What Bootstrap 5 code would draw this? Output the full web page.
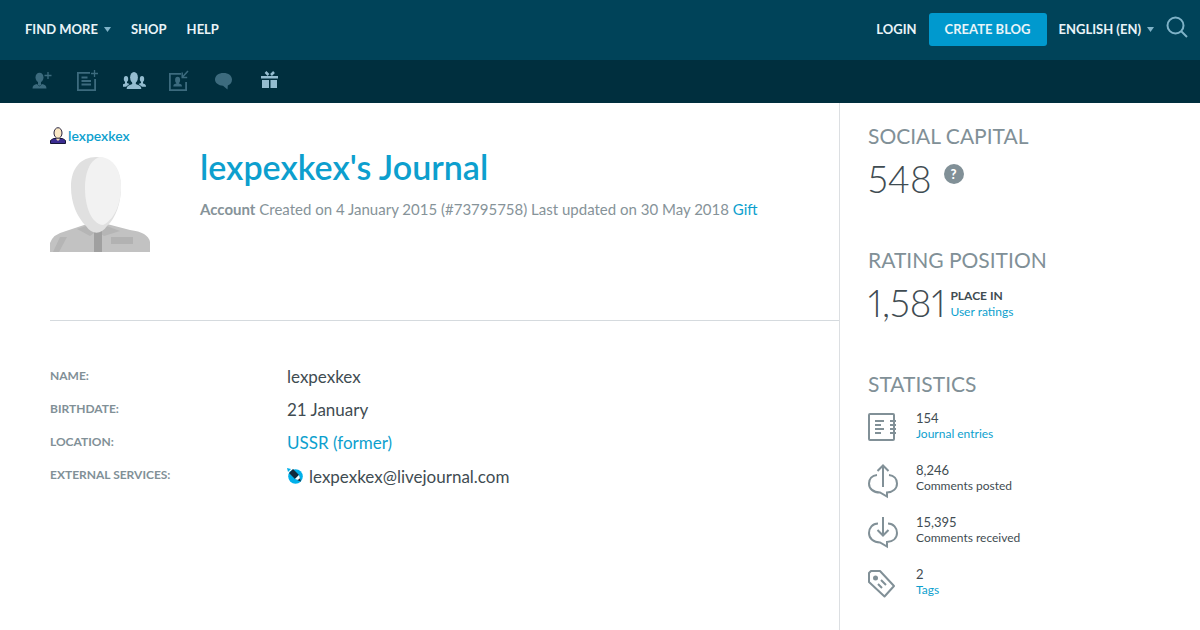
<!DOCTYPE html>
<html lang="en">
<head>
<meta charset="utf-8">
<meta name="viewport" content="width=device-width, initial-scale=1">
<title>lexpexkex's Journal</title>
<link rel="stylesheet" href="https://cdn.jsdelivr.net/npm/bootstrap@5.3.0/dist/css/bootstrap.min.css">
<style>
body{font-family:Lato,"Liberation Sans",sans-serif;color:#3f4c52;background:#fff}
a{color:#0d9fce;text-decoration:none}
svg{display:block;flex:none}
.topbar{background:#004359;height:60px;padding:0 12px 2px 25px;font-size:13px;line-height:20px;font-weight:700}
.topbar a{color:#e9f4f8}
.topbar svg{color:#7fb3c8}
.topbar .menu-left{gap:20px}
.topbar .menu-right{gap:12px}
.topbar .has-caret{gap:6px}
.topbar .btn-create{background:#0099ce;color:#e9f4f8;font-size:13px;font-weight:700;line-height:21px;padding:6px 16px;border-radius:3px}
.toolbar{background:#002f3e;height:43px;padding:0 31px 2px;gap:22px}
.toolbar a{color:#3c6b7e}
.toolbar .lit{color:#94bdd0}
.main-col{padding:24px 0 0 50px}
.side-col{width:361px;border-left:1px solid #dcdfe2;padding:20px 28px;min-height:calc(100vh - 103px)}
.profile-head{border-bottom:1px solid #d5dade;height:194px}
.avatar-col{width:150px}
.user-link{font-size:14px;line-height:18px;font-weight:600;gap:2px}
.journal-title{font-size:34px;line-height:40px;font-weight:600;color:#0d9fce;margin:20px 0 12px}
.account{font-size:15px;line-height:20px;color:#869399}
.details{padding-top:40px}
.details .entry{height:33px}
.details dt{width:237px;font-size:12px;line-height:30px;font-weight:700;color:#819097}
.details dd{font-size:17px;line-height:32px}
.service{gap:6px}
.side-title{font-size:21px;line-height:26px;font-weight:400;color:#819097}
.side-block{height:124px}
.figure-num{font-size:37px;line-height:36px;font-weight:300;font-variant-numeric:proportional-nums}
.figure-row{margin-top:12px}
.rank-note{font-size:12px;line-height:16px;padding:3px 0 0 5px}
.help-mark{width:20px;height:20px;background:#819097;color:#fff;font-size:13px;line-height:20px;font-weight:900;margin:3px 0 0 12px}
.stat-list{padding-top:14px}
.stat-item{font-size:13px;line-height:15px;height:52px}
.stat-label{font-size:12px}
.stat-icon{width:48px;color:#819097}
</style>
</head>
<body>
<header>
<nav class="topbar d-flex align-items-center justify-content-between" aria-label="Main">
  <div class="menu-left d-flex align-items-center">
    <a href="#" class="has-caret d-flex align-items-center">FIND MORE <svg width="7" height="5"><path d="M0 0h7L3.500 5z" fill="currentColor"/></svg></a>
    <a href="#">SHOP</a>
    <a href="#">HELP</a>
  </div>
  <div class="menu-right d-flex align-items-center">
    <a href="#">LOGIN</a>
    <button type="button" class="btn btn-create border-0">CREATE BLOG</button>
    <a href="#" class="has-caret d-flex align-items-center">ENGLISH (EN) <svg width="7" height="5"><path d="M0 0h7L3.500 5z" fill="currentColor"/></svg></a>
    <a href="#" aria-label="Search"><svg width="22" height="26" fill="none" stroke="currentColor" stroke-width="2"><circle cx="9.500" cy="9.500" r="8"/><path d="M15 15l6 6"/></svg></a>
  </div>
</nav>
<nav class="toolbar d-flex align-items-center" aria-label="Journal actions">
  <a href="#" aria-label="Add friend"><svg width="24" height="24" fill="currentColor"><ellipse cx="8.500" cy="8.500" rx="4" ry="4.800"/><path d="M7 12h3v3.500l-1.500 1.500L7 15.500z"/><path d="M1.500 19.500c0-3 2-4 4.500-4.500l2.500 2.500L11 15c2.500.5 4.500 1.500 4.500 4.500z"/><path d="M17 3v7M13.500 6.500h7" stroke="currentColor" stroke-width="1.300"/></svg></a>
  <a href="#" aria-label="Add note"><svg width="24" height="24" viewBox="0 1 24 24" fill="none" stroke="currentColor" stroke-width="1.800"><path d="M13 4.900H.9v17.200h17.200V11M4.500 9.500h6M4.500 13h9.500M4.500 16.500h9.500"/><path d="M17.500 2v7M14 5.500h7" stroke-width="1.300"/></svg></a>
  <a href="#" class="lit" aria-label="Community"><svg width="24" height="24" viewBox="1 0 24 24" fill="currentColor"><g transform="translate(-1)"><ellipse cx="13" cy="8.500" rx="3.900" ry="5.600"/><path d="M11.200 11h3.600v4l3.500 1.500c1.500.7 2 2 2 3.500H5.700c0-1.500.5-2.800 2-3.500l3.500-1.500z"/><ellipse cx="5" cy="10" rx="2.200" ry="3"/><path d="M4 12h2v2l2.500 1L5 17.800H1c0-1.800.5-2.600 3-3.300z"/><ellipse cx="21" cy="10" rx="2.200" ry="3"/><path d="M20 12h2v2.500c2.500.7 3 1.500 3 3.300h-4L17.500 15l2.500-1z"/></g></svg></a>
  <a href="#" aria-label="Share contact"><svg width="24" height="24" viewBox="2 0 24 24" fill="none" stroke="currentColor" stroke-width="1.800"><path d="M13 4.900H1.900v16.200h16.200V13" transform="translate(1)"/><path d="M21 2l-5.500 6M15.200 3.500v5h5" stroke-width="1.500"/><g fill="currentColor" stroke="none" transform="translate(1)"><ellipse cx="9.600" cy="11" rx="2.500" ry="3.200"/><path d="M8.300 13h2.600v1.500c2.300.5 3.100 1.300 3.100 3H5.300c0-1.700.5-2.500 3-3z"/></g></svg></a>
  <a href="#" aria-label="Comments"><svg width="24" height="24" fill="currentColor"><path d="M8.500 4C13.500 4 17 6.700 17 10.500c0 2.700-1.500 5-4.200 6l-.3 4-4.500-3.700C3.500 16.500 0 14 0 10.500 0 6.700 3.500 4 8.500 4z"/></svg></a>
  <a href="#" class="lit" aria-label="Gift"><svg width="24" height="24" fill="currentColor"><path d="M0 7h17v2.500H0zM1 11h7v8H1zM9.500 11H16v8H9.500z"/><path d="M4.500 3l3 3M13 3l-3 3" stroke="currentColor" stroke-width="2.500"/></svg></a>
</nav>
</header>
<div class="d-flex">
  <main class="main-col flex-grow-1">
    <section class="profile-head d-flex">
      <div class="avatar-col">
        <a href="#" class="user-link d-flex align-items-center">
          <svg width="16" height="18"><path d="M.500 16.500v-3l3-2h9l3 2v3z" fill="#3b2c91" stroke="#171638"/><path d="M6.500 10h3v2.500L8 14l-1.500-1.500z" fill="#f5deb5"/><ellipse cx="8" cy="6" rx="4" ry="5.300" fill="#fae8c5" stroke="#2a2540"/></svg>lexpexkex</a>
        <svg class="mt-2" width="100" height="100" viewBox="0 2 100 100" aria-label="User picture"><path d="M0 101V92Q3 83 16 80L37 73h20l23 6q18 2 20 12v10z" fill="#c2c2c2"/><path d="M27 78l15-5 12 1 16 6-16 5-7-5-7 5z" fill="#b5b5b5"/><path d="M10 86l7 0-8 15H3z" fill="#b5b5b5"/><path d="M44 80h8v21h-8z" fill="#a0a0a0"/><path d="M61 86h22v7H61z" fill="#b2b2b2"/><path d="M46 6C31 6 21 17 21 36c0 16 6 30 15 39 6 9 15 9 21 0 9-8 14-23 14-39C71 17 61 6 46 6z" fill="#e0e0e0"/><path d="M51 6c12 1 20 13 20 30 0 17-7 33-18 38-11-1-18-17-18-37 0-17 6-30 16-31z" fill="#f2f2f2"/></svg>
      </div>
      <div>
        <h1 class="journal-title">lexpexkex's Journal</h1>
        <p class="account m-0"><b>Account</b> Created on 4 January 2015 (#73795758) Last updated on 30 May 2018 <a href="#">Gift</a></p>
      </div>
    </section>
    <section class="details">
      <dl class="m-0">
        <div class="entry d-flex"><dt>NAME:</dt><dd class="m-0">lexpexkex</dd></div>
        <div class="entry d-flex"><dt>BIRTHDATE:</dt><dd class="m-0">21 January</dd></div>
        <div class="entry d-flex"><dt>LOCATION:</dt><dd class="m-0"><a href="#">USSR (former)</a></dd></div>
        <div class="entry d-flex"><dt>EXTERNAL SERVICES:</dt><dd class="service m-0 d-flex align-items-center"><svg width="16" height="18"><circle cx="8.500" cy="8.500" r="7.300" fill="#00b0ea"/><path d="M0 0l4 1-3 3z" fill="#00b0ea"/><path d="M2 5l4-4 6 6-4 4z" fill="#122a3c"/><path d="M8 11l4-4 1.500 5.500z" fill="#fff"/><path d="M10.500 12.300l2.500-2 1 3.200z" fill="#122a3c"/></svg>lexpexkex@livejournal.com</dd></div>
      </dl>
    </section>
  </main>
  <aside class="side-col flex-shrink-0">
    <section class="side-block">
      <h2 class="side-title m-0">SOCIAL CAPITAL</h2>
      <div class="figure-row d-flex"><span class="figure-num">548</span><a href="#" class="help-mark rounded-circle text-center" aria-label="Help">?</a></div>
    </section>
    <section class="side-block">
      <h2 class="side-title m-0">RATING POSITION</h2>
      <div class="figure-row d-flex"><span class="figure-num">1,581</span><div class="rank-note"><b class="d-block">PLACE IN</b><a href="#">User ratings</a></div></div>
    </section>
    <section>
      <h2 class="side-title m-0">STATISTICS</h2>
      <ul class="stat-list list-unstyled m-0">
        <li class="stat-item d-flex"><div class="stat-icon"><svg width="32" height="32" fill="none" stroke="currentColor" stroke-width="2"><rect x="1" y="3" width="25" height="26" rx="1"/><path d="M7 10h9M7 14h6M7 18h9M7 22h6M22 10h6M22 14h6M22 18h6M22 22h6"/></svg></div><div><div>154</div><a href="#" class="stat-label">Journal entries</a></div></li>
        <li class="stat-item d-flex"><div class="stat-icon"><svg width="32" height="36" fill="none" stroke="currentColor" stroke-width="2"><path d="M15 24V3M9.500 8L15 2.500 20.500 8M9 12C4 12.500 1 16 1 20.500 1 25.500 5 29.500 12 29.500l7 4V29.500c6-.5 10-4 10-9 0-4.500-3-8-8-8.500"/></svg></div><div><div>8,246</div><div class="stat-label">Comments posted</div></div></li>
        <li class="stat-item d-flex"><div class="stat-icon"><svg width="32" height="36" fill="none" stroke="currentColor" stroke-width="2"><path d="M15 2v18M9.500 15l5.500 5.500 5.500-5.500M10 8.500C4.500 8.500 1 13 1 18c0 5.500 4.500 9.500 11 9.500l7 4V27c6-.5 10-4 10-9 0-5-3.500-9.500-9-9.500"/></svg></div><div><div>15,395</div><div class="stat-label">Comments received</div></div></li>
        <li class="stat-item d-flex"><div class="stat-icon"><svg width="32" height="36" fill="none" stroke="currentColor" stroke-width="2" stroke-linejoin="round"><path d="M1 6l2-2h9l14 15-9.500 10.500L1 15z"/><circle cx="7.500" cy="11" r="2.500" fill="currentColor" stroke="none"/><path d="M13 13l5 5M10 17l4 4"/></svg></div><div><div>2</div><a href="#" class="stat-label">Tags</a></div></li>
      </ul>
    </section>
  </aside>
</div>
<script src="https://cdn.jsdelivr.net/npm/bootstrap@5.3.0/dist/js/bootstrap.bundle.min.js"></script>
</body>
</html>
